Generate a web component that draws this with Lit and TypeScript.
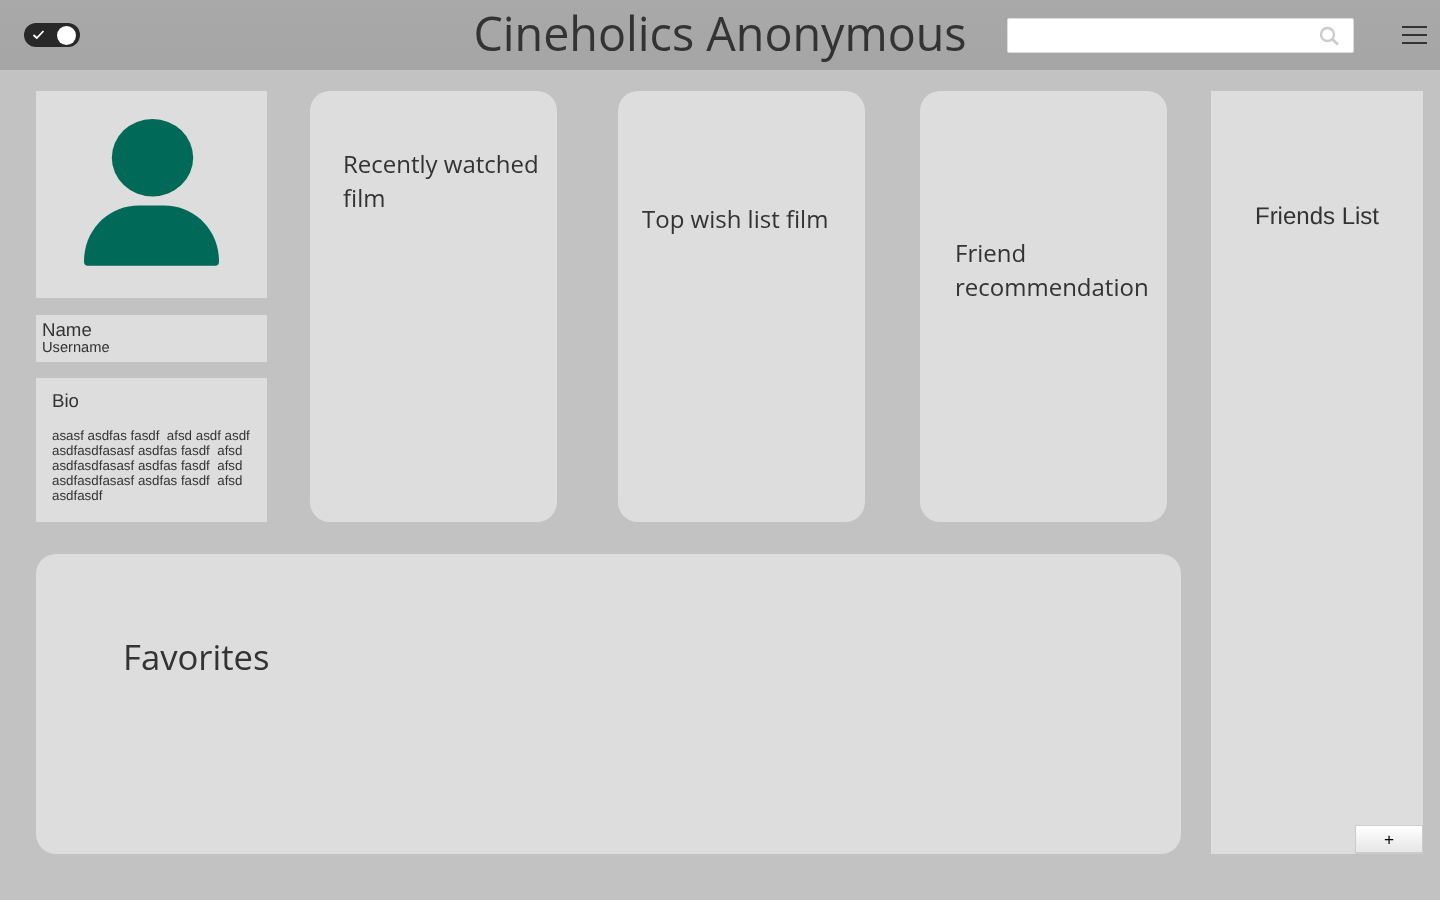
import { LitElement, html, css } from 'lit';
import { customElement } from 'lit/decorators.js';

const BIO = 'asasf asdfas fasdf  afsd asdf asdf asdfasdfasasf asdfas fasdf  afsd asdfasdfasasf asdfas fasdf  afsd asdfasdfasasf asdfas fasdf  afsd asdfasdf';

@customElement('app-root')
export class AppRoot extends LitElement {
  static styles = css`
    :host {
      display: block;
      height: 900px;
      overflow: hidden;
      background: #c2c2c2;
      color: #333;
      font-family: 'Open Sans', sans-serif;
    }
    .topbar {
      height: 70px;
      display: grid;
      grid-template-columns: 1fr auto 1fr;
      align-items: center;
      background: linear-gradient(#a9a9a9, #a5a5a5);
      padding: 0 13px;
      box-sizing: border-box;
    }
    .toggle {
      width: 56px;
      height: 24px;
      margin-left: 11px;
      border-radius: 12px;
      background: #282828;
      display: flex;
      align-items: center;
      justify-content: space-between;
      padding: 0 4px 0 8px;
      box-sizing: border-box;
    }
    .toggle svg { display: block; margin-top: -1px; }
    .knob {
      width: 19px;
      height: 19px;
      border-radius: 50%;
      background: #fff;
    }
    .title {
      margin: -4px 0 0;
      font-size: 46.67px;
      font-weight: 400;
      line-height: 70px;
      color: #333;
      will-change: opacity;
    }
    .right {
      display: flex;
      align-items: center;
      justify-content: flex-end;
      gap: 48px;
    }
    .search {
      width: 347px;
      height: 35px;
      box-sizing: border-box;
      background: #fff;
      border: 1px solid #ddd;
      border-radius: 2px;
      display: flex;
      align-items: center;
      justify-content: flex-end;
      padding: 2px 14px 0 0;
    }
    .burger {
      width: 25px;
      display: flex;
      flex-direction: column;
      gap: 6px;
    }
    .burger span {
      height: 2px;
      background: #333;
    }
    main {
      display: flex;
      gap: 30px;
      padding: 21px 17px 0 36px;
    }
    .left {
      width: 1145px;
      display: flex;
      flex-direction: column;
      gap: 32px;
    }
    .row {
      display: flex;
      height: 431px;
    }
    .profile {
      width: 231px;
      display: flex;
      flex-direction: column;
    }
    .panel { background: #ddd; }
    /* grey antialiasing, as in the reference */
    .soft {
      display: block;
      will-change: opacity;
    }
    .avatar {
      height: 207px;
      display: flex;
      align-items: center;
      justify-content: center;
    }
    .avatar svg { margin-bottom: 4px; }
    .who {
      height: 47px;
      margin-top: 17px;
      padding: 6px 6px 0;
      box-sizing: border-box;
      font-family: 'Liberation Sans', Arial, sans-serif;
      text-rendering: geometricPrecision;
    }
    .who .name { font-size: 18.67px; line-height: 18px; }
    .who .username { font-size: 14.67px; line-height: 16px; padding-top: 1px; }
    .bio {
      flex: 1;
      margin-top: 16px;
      padding: 12px 16px 0;
      font-family: 'Liberation Sans', Arial, sans-serif;
      text-rendering: geometricPrecision;
    }
    .bio h2 {
      margin: 0 0 17px;
      font-size: 18.67px;
      font-weight: 400;
      line-height: 21px;
    }
    .bio p {
      margin: 0;
      font-size: 13.33px;
      line-height: 15px;
      white-space: pre-wrap;
    }
    .card {
      width: 247px;
      border-radius: 20px;
      box-sizing: border-box;
      font-size: 24px;
      line-height: 34px;
    }
    .recent { margin-left: 43px; padding: 56px 0 0 33px; }
    .wish { margin-left: 61px; padding: 111px 0 0 24px; }
    .rec { margin-left: 55px; padding: 145px 0 0 35px; }
    .favorites {
      height: 300px;
      border-radius: 20px;
      padding: 78px 0 0 87px;
      box-sizing: border-box;
      font-size: 34.67px;
      line-height: 50px;
    }
    .friends {
      width: 212px;
      height: 763px;
      position: relative;
      padding-top: 111px;
      box-sizing: border-box;
      text-align: center;
      font-family: 'Liberation Sans', Arial, sans-serif;
      font-size: 24px;
      line-height: 30px;
      text-rendering: geometricPrecision;
    }
    .add {
      position: absolute;
      right: 0;
      bottom: 0;
      width: 68px;
      height: 29px;
      box-sizing: border-box;
      border: 1px solid #ccc;
      border-bottom-width: 2px;
      background: linear-gradient(#fff, #e6e6e6);
      color: #000;
      font-family: 'Liberation Sans', Arial, sans-serif;
      font-size: 17.33px;
      line-height: 26px;
      padding: 0;
    }
  `;

  render() {
    return html`
      <header class="topbar">
        <div>
          <div class="toggle">
            <svg width="13" height="11" viewBox="0 0 13 11"><path d="M1.5 6 L4.8 9 L11.5 2" fill="none" stroke="#fff" stroke-width="1.7"/></svg>
            <span class="knob"></span>
          </div>
        </div>
        <h1 class="title">Cineholics Anonymous</h1>
        <div class="right">
          <div class="search">
            <svg width="20" height="20" viewBox="0 0 20 20"><circle cx="8.5" cy="8.5" r="6.5" fill="none" stroke="#ccc" stroke-width="2.4"/><path d="M13 13 L19 18.5" stroke="#ccc" stroke-width="2.8"/></svg>
          </div>
          <div class="burger"><span></span><span></span><span></span></div>
        </div>
      </header>
      <main>
        <div class="left">
          <div class="row">
            <div class="profile">
              <div class="panel avatar">
                <svg width="135" height="147" viewBox="0 0 135 147">
                  <ellipse cx="68.5" cy="38.7" rx="40.7" ry="38.7" fill="#006957"/>
                  <path d="M0 142.7 C0 110 25 86.5 55 86.5 H80 C110 86.5 135 110 135 142.7 Q135 146.7 131 146.7 H4 Q0 146.7 0 142.7 Z" fill="#006957"/>
                </svg>
              </div>
              <div class="panel who">
                <div class="name soft">Name</div>
                <div class="username soft">Username</div>
              </div>
              <div class="panel bio">
                <h2 class="soft">Bio</h2>
                <p class="soft">${BIO}</p>
              </div>
            </div>
            <div class="panel card recent"><span class="soft">Recently watched film</span></div>
            <div class="panel card wish"><span class="soft">Top wish list film</span></div>
            <div class="panel card rec"><span class="soft">Friend recommendation</span></div>
          </div>
          <div class="panel favorites"><span class="soft">Favorites</span></div>
        </div>
        <aside class="panel friends">
          <span class="soft">Friends List</span>
          <button class="add"><span class="soft">+</span></button>
        </aside>
      </main>
    `;
  }
}
